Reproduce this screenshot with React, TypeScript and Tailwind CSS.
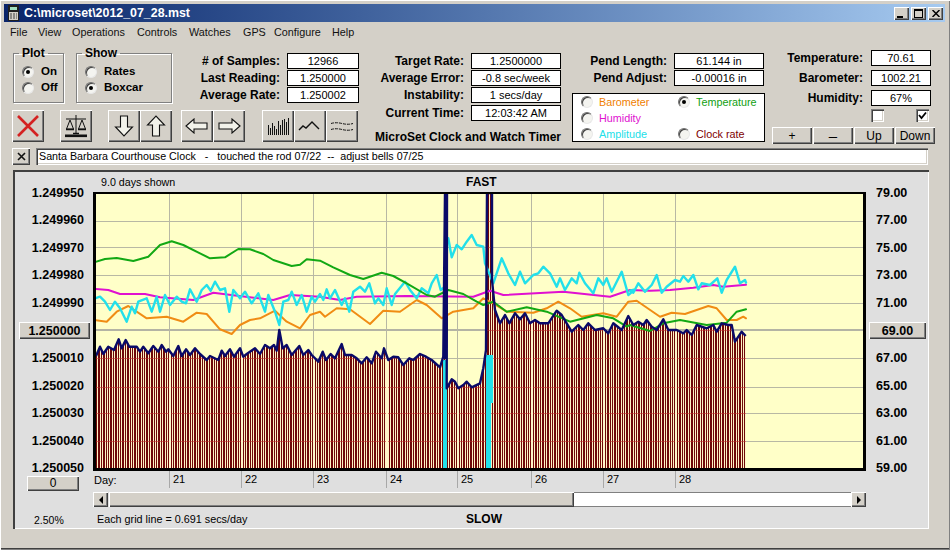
import React from "react";

type P = [number, number];
const z = (ox: number, oy: number, a: number[]): P[] => {
  const r: P[] = [];
  for (let i = 0; i < a.length; i += 2) r.push([ox + a[i] / 3, oy + a[i + 1] / 3]);
  return r;
};
const str = (p: P[]) => p.map(([x, y]) => `${x.toFixed(1)},${y.toFixed(1)}`).join(" ");

const green: P[] = [
  ...z(0, 170, [285, 276, 315, 267, 350, 264, 400, 273, 445, 260, 480, 225, 515, 214, 550, 225, 600, 250, 630, 265, 675, 262, 715, 237, 750, 238, 790, 252, 820, 270, 875, 288, 900, 284, 920, 268]),
  ...z(320, 170, [0, 272, 40, 292, 90, 315, 130, 327, 185, 308, 220, 318, 260, 340, 320, 375, 345, 380, 385, 360, 430, 372, 470, 395, 490, 405, 520, 395, 560, 425, 620, 412, 680, 425, 750, 455, 830, 435, 880, 445, 920, 470]),
  ...z(630, 170, [0, 465, 60, 483, 100, 460, 150, 450, 230, 465, 290, 458, 320, 425, 348, 418]),
];
const orange: P[] = [
  ...z(0, 170, [285, 450, 320, 455, 350, 425, 385, 408, 440, 445, 500, 440, 550, 455, 590, 428, 620, 432, 660, 478, 695, 492, 720, 465, 750, 450, 780, 445, 825, 422, 860, 455, 900, 475, 930, 435]),
  ...z(320, 170, [0, 425, 15, 440, 50, 415, 90, 418, 150, 462, 190, 422, 240, 425, 290, 390, 320, 405, 365, 445, 400, 425, 460, 415, 490, 385, 520, 400, 560, 425, 640, 428, 680, 415, 715, 395, 750, 415, 785, 440, 850, 430, 890, 440, 925, 395]),
  ...z(630, 170, [20, 392, 90, 440, 125, 428, 165, 432, 235, 408, 260, 415, 290, 450, 320, 450, 340, 440, 348, 445]),
];
const magenta: P[] = [
  ...z(0, 170, [285, 357, 325, 360, 360, 372, 435, 372, 480, 382, 580, 390, 640, 368, 700, 376, 820, 390, 870, 375]),
  ...z(320, 170, [0, 380, 60, 390, 110, 380, 260, 378, 460, 380, 510, 362, 550, 375, 730, 365, 870, 380]),
  ...z(630, 170, [0, 360, 60, 362, 120, 360, 190, 353, 250, 345, 280, 350, 348, 344]),
];
const cyan1: P[] = [
  ...z(0, 170, [285, 385, 300, 380, 315, 395, 330, 420, 345, 395, 360, 415, 380, 455, 395, 410, 405, 430, 415, 395, 440, 385, 455, 425, 470, 380, 480, 425, 495, 375, 510, 405, 530, 380, 545, 395, 558, 400, 570, 358, 590, 395, 605, 360, 620, 345, 632, 362, 645, 335, 660, 360, 675, 355, 688, 425, 700, 360, 720, 385, 735, 365, 755, 400, 775, 370, 795, 425, 805, 375, 825, 425, 838, 465, 850, 395, 865, 390, 875, 365, 890, 405, 905, 375, 920, 425, 935, 380, 945, 395]),
  ...z(320, 170, [0, 372, 10, 390, 20, 358, 30, 385, 45, 360, 65, 405, 75, 385, 88, 425, 100, 365, 120, 350, 135, 365, 148, 340, 165, 400, 175, 385, 190, 405, 200, 355, 215, 405, 225, 372, 255, 335, 270, 360, 290, 385, 305, 355, 325, 370, 335, 340, 350, 315, 362, 360, 375, 350]),
];
const cyan2: P[] = [
  ...z(320, 170, [385, 205, 395, 262, 410, 225, 425, 238, 440, 215, 455, 195, 470, 225, 490, 230, 495, 280, 520, 340, 545, 265, 565, 310, 585, 345, 600, 305, 615, 340, 640, 315, 655, 310, 670, 290, 690, 310, 710, 350, 720, 325, 735, 360, 755, 325, 770, 340, 778, 308, 795, 340, 820, 370, 835, 325, 850, 345, 860, 325, 875, 365, 905, 305, 925, 375, 945, 358]),
  ...z(630, 170, [0, 362, 10, 368, 25, 340, 45, 365, 65, 345, 80, 315, 95, 368, 110, 350, 135, 330, 150, 335, 160, 318, 175, 335, 190, 315, 205, 358, 215, 340, 240, 345, 262, 325, 275, 368, 290, 330, 315, 290, 330, 340, 345, 330, 348, 338]),
];
const navy: P[] = [
  ...z(90, 280, [18, 228, 30, 200, 40, 222, 55, 200, 72, 210, 86, 178, 95, 205, 107, 180, 118, 200, 140, 200, 150, 215, 160, 200, 175, 220, 190, 198, 205, 215, 215, 195, 228, 215, 235, 208, 250, 228, 265, 198, 275, 228, 288, 208, 300, 225, 315, 205, 330, 222, 350, 240, 360, 228, 385, 240, 395, 212, 405, 228, 420, 208, 432, 230, 450, 205, 460, 230, 470, 222, 495, 205, 510, 222, 525, 195, 540, 205, 552, 195, 560, 212, 568, 150, 578, 205, 590, 195, 605, 225, 628, 198, 640, 225, 655, 210, 665, 225, 685, 245, 698, 215, 708, 240, 722, 222, 735, 235, 755, 192, 765, 225, 785, 225, 800, 235, 815, 250, 830, 232, 845, 250, 858, 215, 875, 235, 882, 205, 895, 240, 910, 230, 925, 232, 940, 255, 958, 235, 970, 240, 990, 222]),
  ...z(420, 280, [18, 230, 35, 240, 60, 262, 70, 230]),
  [445, 193], [447, 193],
  ...z(420, 280, [80, 325, 95, 298, 105, 305, 115, 325, 130, 315, 140, 305, 155, 322, 180, 310, 190, 265]),
  [486, 350], [487, 193], [492, 193], [492, 280],
  ...z(420, 280, [225, 90, 240, 130, 255, 105, 268, 130, 285, 100, 300, 118, 315, 100, 330, 130, 345, 120, 360, 130, 385, 130, 410, 92, 425, 105, 440, 130, 455, 155, 475, 135, 490, 150, 505, 130, 525, 150, 550, 145, 565, 160, 580, 130, 605, 150, 625, 108, 640, 135, 655, 125, 670, 135, 680, 120, 695, 140, 710, 150, 730, 118, 745, 150, 770, 150, 790, 160, 800, 150, 815, 165, 830, 135, 860, 145, 880, 135, 890, 155, 905, 130, 925, 135, 935, 135, 945, 185, 965, 155, 977, 168]),
];
const hLines = [221, 247, 275, 303, 358, 387, 413, 441];
const vLines = [169, 241, 313, 386, 457, 531, 603, 675];
const bars: [number, number][] = [];
for (let i = 0; 96 + i * 2.4 < 746; i++) {
  const a = Math.round(96 + i * 2.4);
  const b = Math.round(96 + (i + 1) * 2.4);
  bars.push([a, b - a - 1]);
}

const raised = "bg-[#d4d0c8] shadow-[inset_1px_1px_0_#ffffff,inset_-1px_-1px_0_#404040,inset_-2px_-2px_0_#808080]";
const sunken = "shadow-[inset_1px_1px_0_#808080,inset_2px_2px_0_#404040,inset_-1px_-1px_0_#ffffff,inset_-2px_-2px_0_#d4d0c8]";

function Radio({ on }: { on?: boolean }) {
  return (
    <span className="w-3 h-3 rounded-full shrink-0 flex items-center justify-center bg-[#f4f4f0] border border-t-[#707070] border-l-[#707070] border-b-[#e8e8e8] border-r-[#e8e8e8] shadow-[inset_1px_1px_0_#404040]">
      {on && <span className="w-1 h-1 rounded-full bg-black" />}
    </span>
  );
}

function Field({ label, value, w, gap, h = "h-4" }: { label: string; value: string; w: string; gap: string; h?: string }) {
  return (
    <div className={`flex items-center justify-end ${gap} ${h}`}>
      <span className="font-bold text-[12px] leading-none whitespace-nowrap">{label}</span>
      <span className={`${w} h-4 bg-white border border-black flex items-center justify-center text-[11px] leading-none`}>{value}</span>
    </div>
  );
}

function ColorRadio({ label, color, on }: { label: string; color: string; on?: boolean }) {
  return (
    <div className="flex items-center gap-[6px] h-4 text-[10.8px] leading-none">
      <Radio on={on} />
      <span className={color}>{label}</span>
    </div>
  );
}

function Tool({ children }: { children: React.ReactNode }) {
  return <div className={`w-8 h-8 flex items-center justify-center ${raised}`}>{children}</div>;
}

function AxisRow({ children }: { children: React.ReactNode }) {
  return <div className="h-[27.6px] flex items-center font-bold text-[12.5px] leading-none">{children}</div>;
}

function Plot() {
  return (
    <svg width="767" height="274" viewBox="96 194 767 274" className="block">
      <defs>
        <clipPath id="under">
          <polygon points={str([[96, 468], ...navy, [746, 350], [746, 468]])} />
        </clipPath>
      </defs>
      <rect x="96" y="194" width="767" height="274" fill="#ffffc8" />
      <g shapeRendering="crispEdges">
        {hLines.map((y) => (
          <rect key={y} x="96" y={y} width="767" height="1" fill="#b8b8a4" />
        ))}
        <rect x="96" y="329" width="767" height="2" fill="#b4b4a4" />
        {vLines.map((x) => (
          <rect key={x} x={x} y="194" width="1" height="274" fill="#b8b8a4" />
        ))}
      </g>
      <g clipPath="url(#under)">
        <g shapeRendering="crispEdges">
          <rect x="96" y="194" width="650" height="274" fill="#fff2c4" />
          {bars.map(([x, w]) => (
            <rect key={x} x={x} y="194" width={w} height="274" fill="#6e0808" />
          ))}
          {hLines.map((y) => (
            <rect key={y} x="96" y={y} width="650" height="1" fill="#c02828" opacity="0.55" />
          ))}
          <rect x="96" y="330" width="650" height="1" fill="#c02828" opacity="0.55" />
          {vLines.map((x) => (
            <rect key={x} x={x} y="194" width="2" height="274" fill="#fff4c8" />
          ))}
        </g>
      </g>
      <g fill="none" strokeLinejoin="round" strokeLinecap="round">
        <polyline points={str(orange)} stroke="#f08c14" strokeWidth="2" />
        <polyline points={str(magenta)} stroke="#e010d0" strokeWidth="2" />
        <polyline points={str(cyan1)} stroke="#22e0ea" strokeWidth="2.4" />
        <polyline points={str(cyan2)} stroke="#22e0ea" strokeWidth="2.4" />
        <polyline points={str(green)} stroke="#12a814" strokeWidth="2" />
      </g>
      <g shapeRendering="crispEdges">
        <rect x="443" y="360" width="4" height="108" fill="#22e0ea" />
        <rect x="486" y="355" width="5" height="113" fill="#22e0ea" />
        <rect x="491" y="355" width="2" height="48" fill="#22e0ea" />
        <rect x="444" y="194" width="3" height="165" fill="#0a0a68" />
      </g>
      <polyline points={str(navy)} fill="none" stroke="#0a0a68" strokeWidth="2.4" strokeLinejoin="round" />
    </svg>
  );
}

export default function App() {
  return (
    <div className="w-[950px] h-[550px] overflow-hidden bg-[#d4d0c8] pt-1 pl-1 pr-[5px] text-black font-['Liberation_Sans',Arial,sans-serif] shadow-[inset_1px_1px_0_#ffffff,inset_-1px_-1px_0_#808080,inset_0_-2px_0_#404040]">
      {/* title bar */}
      <div className="h-[18px] flex items-center bg-gradient-to-r from-[#0a246a] to-[#a6caf0]">
        <svg width="12" height="16" viewBox="0 0 12 16" className="ml-[4px] shrink-0">
          <rect width="11" height="16" fill="#202020" />
          <rect x="2" y="2" width="7" height="3" fill="#a0e0c0" />
          <rect x="1" y="7" width="9" height="8" fill="#d4d0c8" />
          <path d="M2 9h2M5 9h2M8 9h1M2 11h2M5 11h2M8 11h1M2 13h2M5 13h2M8 13h1" stroke="#404040" strokeWidth="1" />
        </svg>
        <span className="ml-[4px] text-white font-bold text-[12.4px] leading-none">C:\microset\2012_07_28.mst</span>
        <div className="ml-auto mr-[2px] flex gap-[2px]">
          <div className={`w-[15px] h-[13px] relative flex items-end justify-center pb-[2px] pr-[3px] ${raised}`}>
            <span className="w-[6px] h-[2px] bg-black" />
          </div>
          <div className={`w-[15px] h-[13px] flex items-center justify-center ${raised}`}>
            <span className="w-[9px] h-[9px] border border-black border-t-2" />
          </div>
          <div className={`w-[15px] h-[13px] flex items-center justify-center ${raised}`}>
            <svg width="8" height="7" viewBox="0 0 8 7"><path d="M0.5 0 L7.5 7 M7.5 0 L0.5 7" stroke="#000" strokeWidth="1.5" /></svg>
          </div>
        </div>
      </div>

      {/* menu */}
      <div className="h-5 flex items-center text-[10.8px] leading-none pl-[6px] text-[#111]">
        <span className="w-7">File</span>
        <span className="w-[34px]">View</span>
        <span className="w-[65px]">Operations</span>
        <span className="w-[52px]">Controls</span>
        <span className="w-[54px]">Watches</span>
        <span className="w-[31px]">GPS</span>
        <span className="w-[58px]">Configure</span>
        <span>Help</span>
      </div>

      {/* controls */}
      <div className="h-[104px] flex pl-2 pt-1">
        <div className="w-[347px] flex flex-col">
          <div className="h-[57px] flex">
            <fieldset className="ml-px w-[51px] h-[57px] border border-[#808080] shadow-[1px_1px_0_#ffffff,inset_1px_1px_0_#ffffff] pl-2">
              <legend className="-ml-[3px] px-[3px] font-bold text-[12px] leading-[14px]">Plot</legend>
              <div className="flex items-center gap-[7px] h-4 mt-1 font-bold text-[11.5px] leading-none"><Radio on />On</div>
              <div className="flex items-center gap-[7px] h-4 font-bold text-[11.5px] leading-none"><Radio />Off</div>
            </fieldset>
            <fieldset className="ml-3 w-24 h-[57px] border border-[#808080] shadow-[1px_1px_0_#ffffff,inset_1px_1px_0_#ffffff] pl-2">
              <legend className="-ml-[3px] px-[3px] font-bold text-[12px] leading-[14px]">Show</legend>
              <div className="flex items-center gap-[7px] h-4 mt-1 font-bold text-[11.5px] leading-none"><Radio />Rates</div>
              <div className="flex items-center gap-[7px] h-4 font-bold text-[11.5px] leading-none"><Radio on />Boxcar</div>
            </fieldset>
            <div className="ml-auto mt-[7px] flex flex-col gap-px">
              <Field label="# of Samples:" value="12966" w="w-[72px]" gap="gap-[7px]" />
              <Field label="Last Reading:" value="1.250000" w="w-[72px]" gap="gap-[7px]" />
              <Field label="Average Rate:" value="1.250002" w="w-[72px]" gap="gap-[7px]" />
            </div>
          </div>
          <div className="mt-[7px] flex">
            <Tool>
              <svg width="24" height="24" viewBox="0 0 24 24"><path d="M2 2 L22 22 M22 2 L2 22" stroke="#d42222" strokeWidth="2.6" /></svg>
            </Tool>
            <div className="ml-4">
              <Tool>
                <svg width="24" height="24" viewBox="0 0 24 24" fill="none" stroke="#111" strokeWidth="1">
                  <path d="M12 1 V20 M2 5 H22" />
                  <path d="M6 6 L2.5 15 H9.5 Z M18 6 L14.5 15 H21.5 Z" />
                  <path d="M2 15.5 H10 M14 15.5 H22 M9 19.5 H15" strokeWidth="1.4" />
                  <rect x="1" y="20.5" width="22" height="2.6" fill="#111" stroke="none" />
                </svg>
              </Tool>
            </div>
            <div className="ml-4 flex">
              <Tool>
                <svg width="20" height="22" viewBox="0 0 20 22"><path d="M6.5 1 H13.5 V12 H18.5 L10 21 L1.5 12 H6.5 Z" fill="#f2f2ea" stroke="#111" strokeWidth="1.1" /></svg>
              </Tool>
              <Tool>
                <svg width="20" height="22" viewBox="0 0 20 22"><path d="M6.5 21 H13.5 V10 H18.5 L10 1 L1.5 10 H6.5 Z" fill="#f2f2ea" stroke="#111" strokeWidth="1.1" /></svg>
              </Tool>
            </div>
            <div className="ml-[9px] flex">
              <Tool>
                <svg width="24" height="16" viewBox="0 0 24 16"><path d="M1 8 L9 1 V5 H22 V11 H9 V15 Z" fill="#f2f2ea" stroke="#111" strokeWidth="1.1" /></svg>
              </Tool>
              <Tool>
                <svg width="24" height="16" viewBox="0 0 24 16"><path d="M23 8 L15 1 V5 H2 V11 H15 V15 Z" fill="#f2f2ea" stroke="#111" strokeWidth="1.1" /></svg>
              </Tool>
            </div>
            <div className="ml-[17px] flex">
              <Tool>
                <svg width="24" height="20" viewBox="0 0 24 20" stroke="#111" strokeWidth="1" shapeRendering="crispEdges">
                  <path d="M2.5 19V9M4.5 19V12M6.5 19V7M8.5 19V10M10.5 19V13M12.5 19V5M14.5 19V9M16.5 19V4M18.5 19V3M20.5 19V6M22.5 19V2" />
                </svg>
              </Tool>
              <Tool>
                <svg width="24" height="12" viewBox="0 0 24 12" fill="none" stroke="#111" strokeWidth="1.4"><path d="M1 10 L5 6 L8 8 L14 2 L18 6 L21 9" /></svg>
              </Tool>
              <Tool>
                <svg width="24" height="12" viewBox="0 0 24 12" fill="none" stroke="#111" strokeWidth="1" strokeDasharray="3 1"><path d="M1 3.5 Q6 2 12 3.5 T23 3.5" /><path d="M1 9.5 Q6 8 12 9.5 T23 9.5" /></svg>
              </Tool>
            </div>
          </div>
        </div>

        <div className="ml-[15px] w-[187px] pt-[3px] mt-1 flex flex-col">
          <div className="flex flex-col gap-px">
            <Field label="Target Rate:" value="1.2500000" w="w-[90px]" gap="gap-[7px]" />
            <Field label="Average Error:" value="-0.8 sec/week" w="w-[90px]" gap="gap-[7px]" />
            <Field label="Instability:" value="1 secs/day" w="w-[90px]" gap="gap-[7px]" />
            <div className="mt-px">
              <Field label="Current Time:" value="12:03:42 AM" w="w-[90px]" gap="gap-[7px]" />
            </div>
          </div>
          <div className="mt-[9px] font-bold text-[12px] leading-[14px] whitespace-nowrap text-right">MicroSet Clock and Watch Timer</div>
        </div>

        <div className="ml-[11px] w-[193px] pt-[3px] mt-1 flex flex-col">
          <div className="flex flex-col gap-px pr-px">
            <Field label="Pend Length:" value="61.144 in" w="w-[90px]" gap="gap-[7px]" />
            <Field label="Pend Adjust:" value="-0.00016 in" w="w-[90px]" gap="gap-[7px]" />
          </div>
          <div className="mt-[7px] h-[49px] bg-white border border-black flex pl-2">
            <div className="w-[97px]">
              <ColorRadio label="Barometer" color="text-[#f08000]" />
              <ColorRadio label="Humidity" color="text-[#e010d0]" />
              <ColorRadio label="Amplitude" color="text-[#20e0e8]" />
            </div>
            <div>
              <ColorRadio label="Temperature" color="text-[#10a010]" on />
              <div className="h-4" />
              <ColorRadio label="Clock rate" color="text-[#800000]" />
            </div>
          </div>
        </div>

        <div className="ml-[7px] w-[163px] mt-1 flex flex-col">
          <div className="flex flex-col gap-1 pr-1">
            <Field label="Temperature:" value="70.61" w="w-[60px]" gap="gap-2" />
            <Field label="Barometer:" value="1002.21" w="w-[60px]" gap="gap-2" />
            <Field label="Humidity:" value="67%" w="w-[60px]" gap="gap-2" />
          </div>
          <div className="mt-[3px] ml-[99px] flex gap-8">
            <span className={`w-[13px] h-[13px] bg-white ${sunken}`} />
            <span className={`w-[13px] h-[13px] bg-white flex items-center justify-center ${sunken}`}>
              <svg width="9" height="9" viewBox="0 0 9 9"><path d="M1 4 L3.5 7 L8 1.5" fill="none" stroke="#000" strokeWidth="1.8" /></svg>
            </span>
          </div>
          <div className="mt-[5px] flex gap-px text-[12px] leading-none">
            <div className={`w-10 h-[17px] flex items-center justify-center ${raised}`}>+</div>
            <div className={`w-10 h-[17px] flex items-center justify-center text-[15px] ${raised}`}>–</div>
            <div className={`w-10 h-[17px] flex items-center justify-center ${raised}`}>Up</div>
            <div className={`w-10 h-[17px] flex items-center justify-center ${raised}`}>Down</div>
          </div>
        </div>
      </div>

      {/* note */}
      <div className="mt-[2px] flex pl-2">
        <div className={`w-[18px] h-[17px] flex items-center justify-center ${raised}`}>
          <svg width="9" height="9" viewBox="0 0 9 9"><path d="M1 1 L8 8 M8 1 L1 8" stroke="#111" strokeWidth="1.6" /></svg>
        </div>
        <div className={`ml-[6px] w-[892px] h-[17px] bg-white flex items-center pl-[3px] text-[10.7px] leading-none whitespace-pre ${sunken}`}>
          Santa Barbara Courthouse Clock   -   touched the rod 07/22  --  adjust bells 07/25
        </div>
      </div>

      {/* chart panel */}
      <div className="mt-[5px] ml-[9px] w-[916px] h-[359px] flex bg-[#dfdfdf] shadow-[inset_1px_1px_0_#404040,inset_2px_2px_0_#404040,inset_-1px_-1px_0_#ffffff]">
        <div className="w-20 pt-[9px] flex flex-col">
          {["1.249950", "1.249960", "1.249970", "1.249980", "1.249990"].map((t) => (
            <AxisRow key={t}><span className="ml-auto mr-[9px]">{t}</span></AxisRow>
          ))}
          <AxisRow>
            <div className={`ml-[6px] w-[71px] h-[17px] flex items-center justify-center ${raised}`}>1.250000</div>
          </AxisRow>
          {["1.250010", "1.250020", "1.250030", "1.250040", "1.250050"].map((t) => (
            <AxisRow key={t}><span className="ml-auto mr-[9px]">{t}</span></AxisRow>
          ))}
          <div className={`-mt-[7px] ml-[14px] w-[52px] h-[15px] flex items-center justify-center text-[12px] leading-none ${raised}`}>0</div>
          <div className="mt-[22px] ml-[21px] text-[10.5px] leading-[14px]">2.50%</div>
        </div>

        <div className="w-[773px] flex flex-col">
          <div className="h-[22px] pt-[5px] flex text-[10.7px] leading-[14px]">
            <span className="w-[373px] pl-2">9.0 days shown</span>
            <span className="font-bold text-[12px]">FAST</span>
          </div>
          <div className="border-[3px] border-t-2 border-black w-[773px] h-[279px]">
            <Plot />
          </div>
          <div className="h-[21px] flex text-[11px] leading-none">
            <span className="w-[76px] pl-px pt-[4px]">Day:</span>
            <span className="w-[72px] h-[17px] border-l border-[#a8a8a8] pl-[3px] pt-[3px]">21</span>
            <span className="w-[72px] h-[17px] border-l border-[#a8a8a8] pl-[3px] pt-[3px]">22</span>
            <span className="w-[73px] h-[17px] border-l border-[#a8a8a8] pl-[3px] pt-[3px]">23</span>
            <span className="w-[71px] h-[17px] border-l border-[#a8a8a8] pl-[3px] pt-[3px]">24</span>
            <span className="w-[74px] h-[17px] border-l border-[#a8a8a8] pl-[3px] pt-[3px]">25</span>
            <span className="w-[72px] h-[17px] border-l border-[#a8a8a8] pl-[3px] pt-[3px]">26</span>
            <span className="w-[72px] h-[17px] border-l border-[#a8a8a8] pl-[3px] pt-[3px]">27</span>
            <span className="w-[72px] h-[17px] border-l border-[#a8a8a8] pl-[3px] pt-[3px]">28</span>
          </div>
          <div className="h-[15px] flex">
            <div className={`w-[15px] flex items-center justify-center ${raised}`}>
              <span className="w-0 h-0 border-y-[4px] border-y-transparent border-r-[4px] border-r-black" />
            </div>
            <div className={`ml-[1px] w-[465px] ${raised}`} />
            <div className="flex-1 bg-white border-t border-b border-[#808080]" />
            <div className={`w-[15px] flex items-center justify-center ${raised}`}>
              <span className="w-0 h-0 border-y-[4px] border-y-transparent border-l-[4px] border-l-black" />
            </div>
          </div>
          <div className="mt-[5px] flex text-[10.8px] leading-[14px]">
            <span className="w-[373px] pl-1">Each grid line = 0.691 secs/day</span>
            <span className="font-bold text-[12px]">SLOW</span>
          </div>
        </div>

        <div className="w-[63px] pt-[9px] flex flex-col">
          {["79.00", "77.00", "75.00", "73.00", "71.00"].map((t) => (
            <AxisRow key={t}><span className="ml-[10px]">{t}</span></AxisRow>
          ))}
          <AxisRow>
            <div className={`ml-[3px] w-[57px] h-[17px] flex items-center justify-center ${raised}`}>69.00</div>
          </AxisRow>
          {["67.00", "65.00", "63.00", "61.00", "59.00"].map((t) => (
            <AxisRow key={t}><span className="ml-[10px]">{t}</span></AxisRow>
          ))}
        </div>
      </div>
    </div>
  );
}
